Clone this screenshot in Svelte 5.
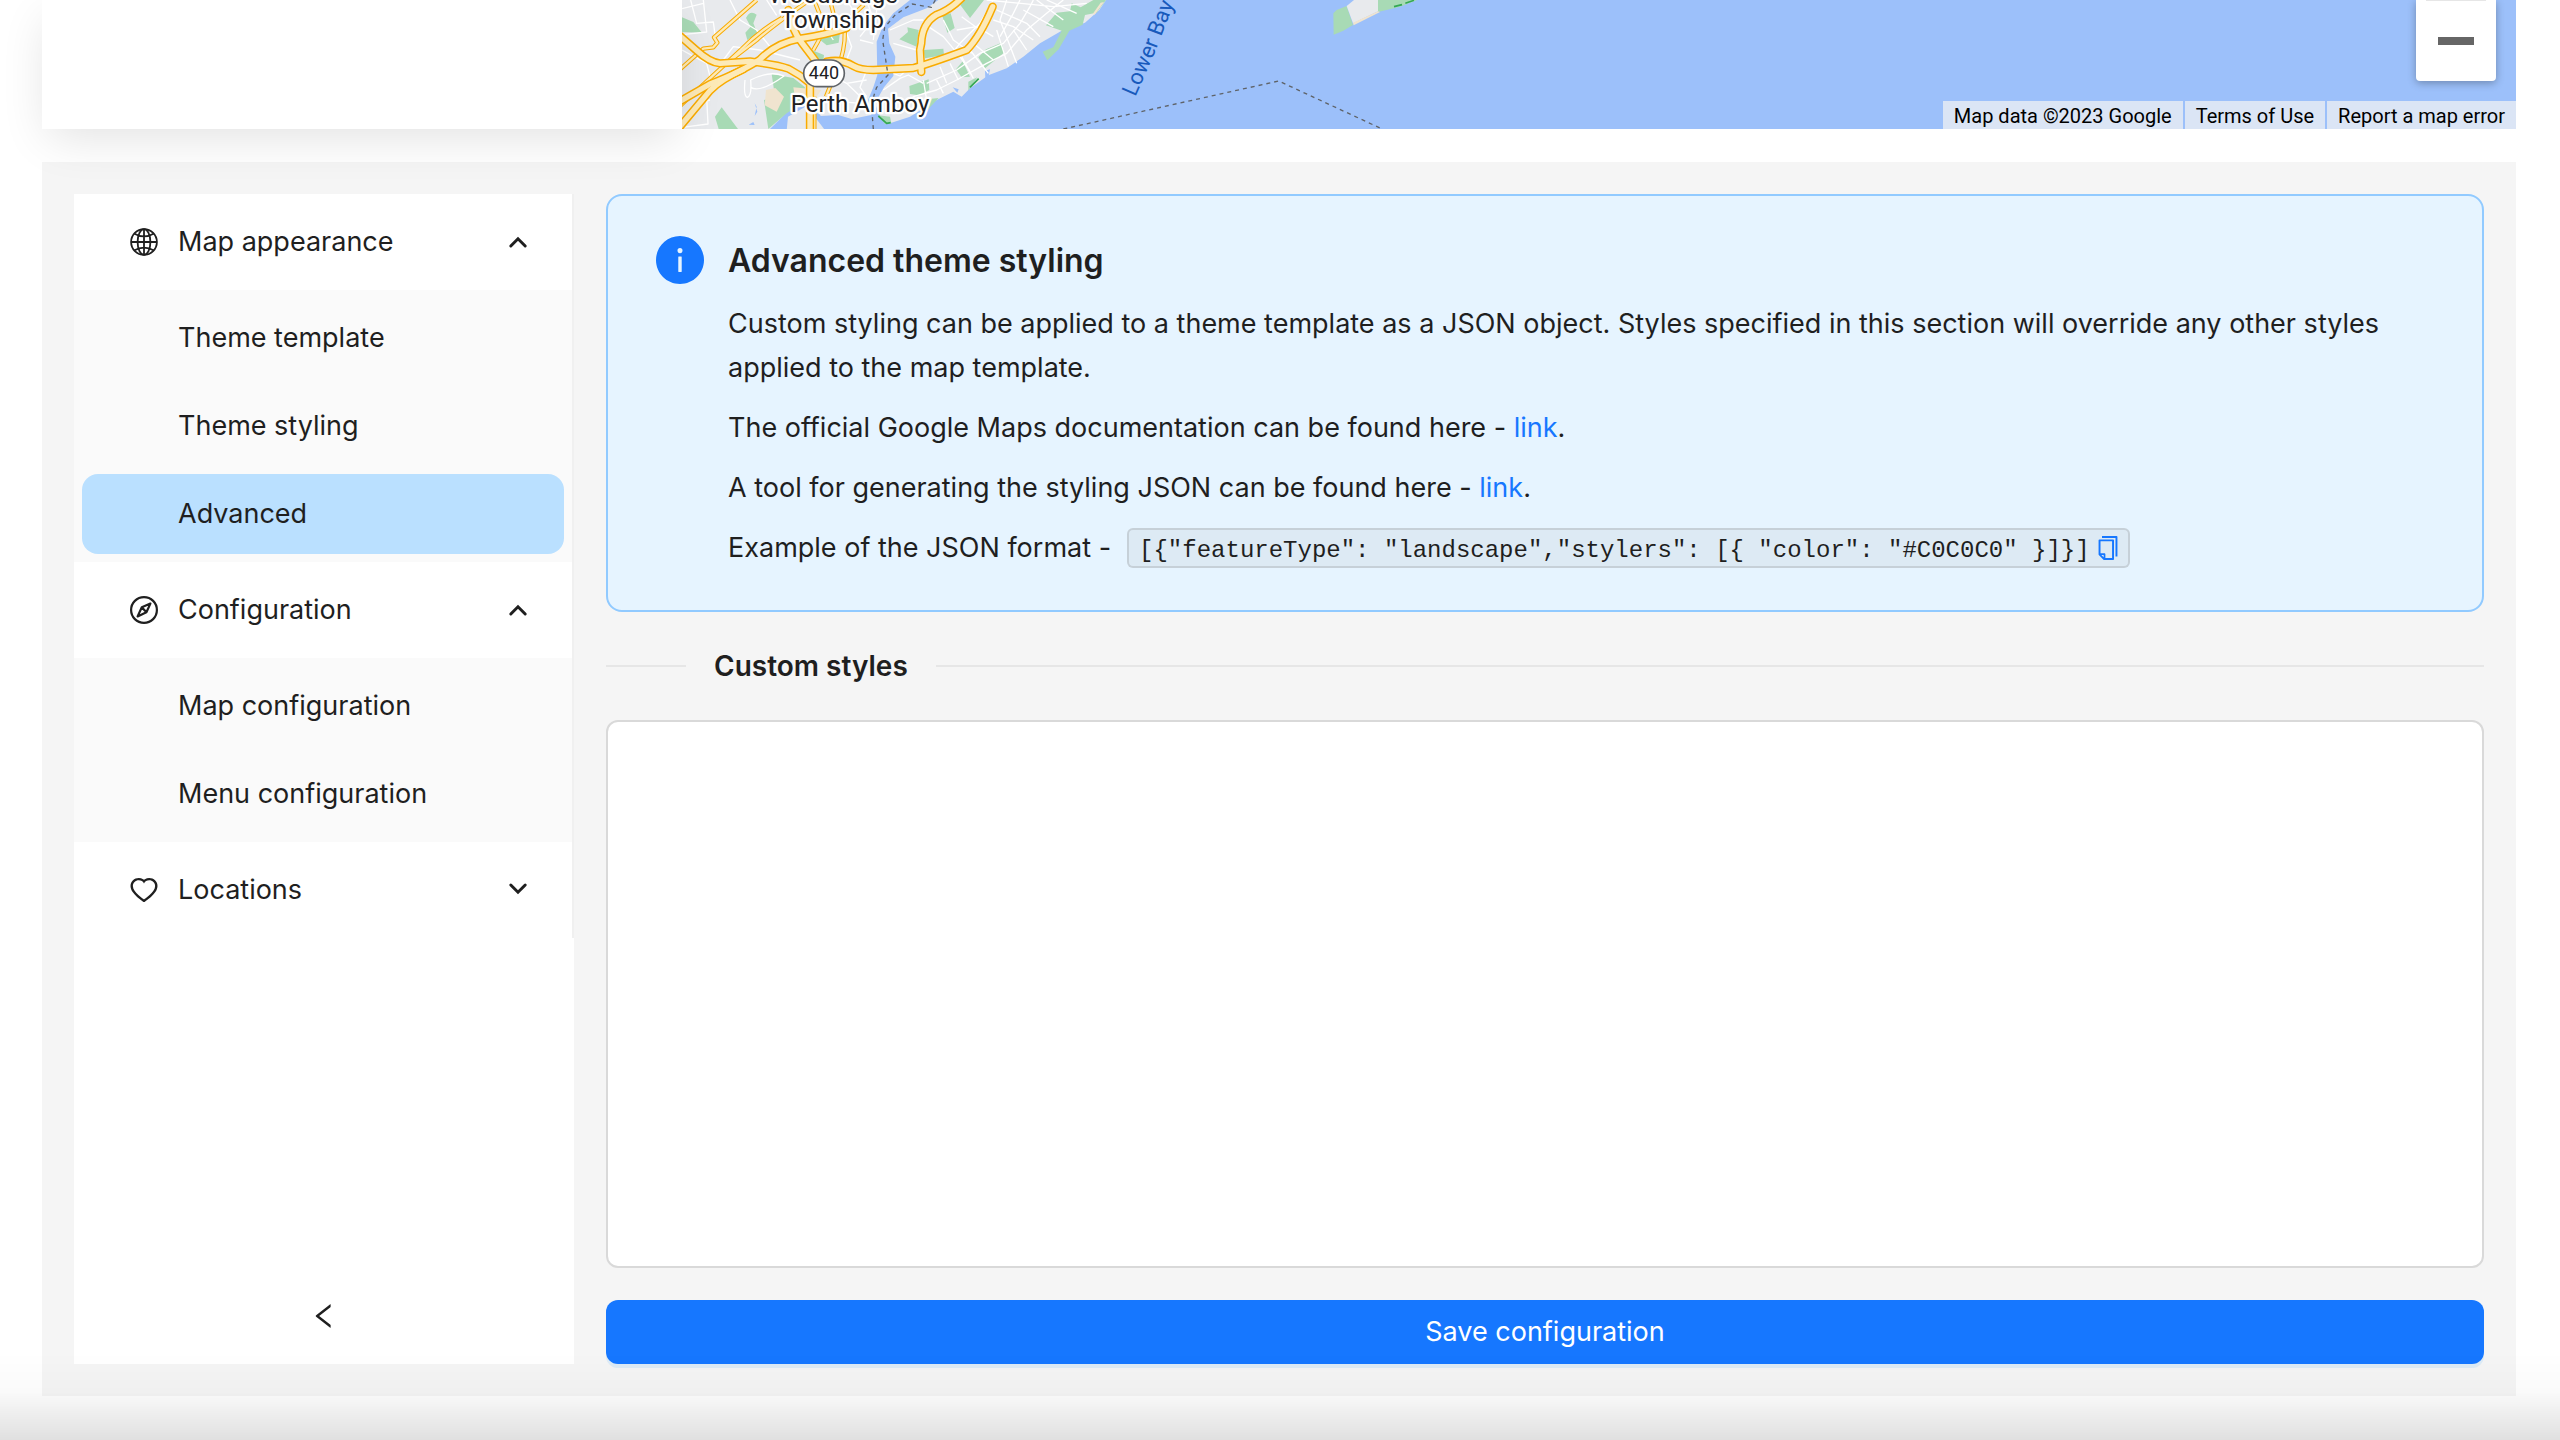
<script lang="ts">
  type Item = { id: string; label: string };
  type Group = { id: string; label: string; icon: string; items: Item[] };

  const groups: Group[] = [
    {
      id: "appearance",
      label: "Map appearance",
      icon: "globe",
      items: [
        { id: "template", label: "Theme template" },
        { id: "styling", label: "Theme styling" },
        { id: "advanced", label: "Advanced" },
      ],
    },
    {
      id: "configuration",
      label: "Configuration",
      icon: "compass",
      items: [
        { id: "map", label: "Map configuration" },
        { id: "menu", label: "Menu configuration" },
      ],
    },
    {
      id: "locations",
      label: "Locations",
      icon: "heart",
      items: [{ id: "list", label: "Location list" }],
    },
  ];

  const example = `[{"featureType": "landscape","stylers": [{ "color": "#C0C0C0" }]}]`;

  // highway centre lines, drawn twice: casing first, then fill
  const highways = [
    "M60 108 L108 150 Q150 188 180 190 L270 184 Q350 194 385 206 Q420 224 450 250 L450 392",
    "M60 304 L150 252 Q250 212 300 178 Q350 128 420 116 Q500 104 560 84",
    "M60 380 L150 272 Q180 240 250 208",
    "M385 30 Q395 90 425 128 L466 182",
    "M500 185 Q545 176 580 198 Q600 210 640 210 L760 204 Q800 194 920 150 Q960 110 998 20",
    "M905 -6 Q870 30 830 44 Q786 70 784 130 L780 150 L784 216",
  ];

  const mainRoads = [
    "M290 0 L162 112 L172 128 L160 142 L130 146 L60 208",
    "M366 54 Q300 90 240 152 L60 318",
    "M440 6 Q340 76 290 120 L215 178",
    "M462 0 L490 70 Q496 90 460 150",
    "M612 14 L552 70 Q560 120 542 180 L498 290",
    "M510 0 L520 40",
    "M463 290 L463 392",
  ];

  const streets = [
    "M66 26 L130 10 M130 0 L140 96 L66 104 M92 0 L110 70 L160 66 L166 112",
    "M66 150 L140 190 L150 230 M110 310 L150 300 M66 382 L144 372 L138 250",
    "M190 180 L220 140 L300 150 L420 180 M210 0 L240 60 L290 90 L330 140 L310 190",
    "M320 0 L350 46 M255 240 Q250 290 262 292 Q276 288 272 240 Q330 210 372 228 Q300 280 272 262",
    "M480 60 L520 120 M560 100 L575 140 L556 190 M600 120 L640 130 M560 250 L612 300 M520 230 L560 250 L620 240",
    "M620 210 L600 262 L620 290 M490 300 L600 310",
    "M690 90 L760 60 L790 60 M700 130 L770 150 M700 220 L720 228 L740 210 M670 270 L720 235 L745 225 L790 250",
    "M805 80 L850 110 L900 170 L930 215 M850 60 L880 120 L935 160 M905 50 L960 90 M890 90 L950 80 L1000 110",
    "M840 200 L860 250 M870 190 L895 240 M905 170 L940 235 M930 150 L985 220",
    "M720 330 L760 290 L830 270 L890 240 L980 190 L1040 160 L1100 90 L1160 40 L1210 0",
    "M800 250 L890 210 L960 160 L1030 130 L1080 70 L1110 20 L1120 0 M830 240 L850 280 M800 300 L790 240",
    "M1000 60 L1060 80 L1120 120 M1010 30 L1100 70 L1140 110 M1040 0 L1020 60 L1070 190",
    "M1010 90 L1045 200 M1090 30 L1180 80 M1130 0 L1210 60 M1160 0 L1250 40 M980 0 L1180 20 L1280 10",
    "M1000 0 L960 70 L900 130 L860 180 M1080 0 L1060 40 L1020 110 M940 130 L1000 180 M1060 90 L1100 150",
    "M620 0 L640 60 L600 110 M560 0 L610 80 M640 120 L650 30",
  ];

  let openGroups = $state(["appearance", "configuration"]);
  let selected = $state("advanced");
  let collapsed = $state(false);
  let customStyles = $state("");

  function toggle(id: string) {
    openGroups = openGroups.includes(id)
      ? openGroups.filter((g) => g !== id)
      : [...openGroups, id];
  }

  function copyExample() {
    navigator.clipboard?.writeText(example);
  }
</script>

<div class="page">
  <section class="preview">
    <div class="card"></div>
    <div class="map">
      <svg class="map-tiles" viewBox="66 0 2880 387" aria-hidden="true">
        <!-- west shore -->
        <path class="land" d="M60 0 H750 L700 40 L668 80 L650 125 L652 225 L640 262 L624 300 L634 345 L575 357 L535 345 L482 348 L470 320 L400 310 L372 345 L325 392 H60 Z" />
        <path class="land" d="M380 392 L384 350 L440 318 L496 392 Z" />
        <!-- island -->
        <path class="land" d="M1338 0 L1318 30 L1275 68 L1205 92 L1140 130 L1090 170 L1040 205 L985 226 L930 265 L905 290 L880 275 L830 300 L750 350 L690 370 L660 348 L645 310 L672 262 L700 228 L706 170 L688 130 L684 86 L730 52 L800 25 L835 0 Z" />
        <path class="park" d="M66 52 L100 66 L126 98 L66 96 Z M258 54 Q270 28 290 44 L280 70 L292 100 L262 120 L256 98 L272 80 Z M165 350 L185 322 L234 387 H176 Z M335 222 L400 234 L435 262 L430 308 L380 340 L325 387 L312 300 L345 290 Z M470 112 L540 98 L536 128 L500 136 Z M455 150 L492 165 L490 182 L450 180 Z" />
        <path class="park" d="M718 118 L744 96 L742 82 L776 90 L770 140 Z M790 150 L850 146 L852 165 L795 175 Z M846 44 L872 40 L884 84 L862 98 Z M890 0 H972 L930 54 Z M955 172 L978 148 L1025 128 L1032 158 L975 205 Z M888 208 L908 184 L930 230 L905 232 Z M748 258 L806 238 L808 270 L776 286 L750 282 Z M1158 76 L1190 38 L1230 34 L1235 10 L1262 22 L1300 0 H1338 L1310 38 L1275 45 L1268 74 L1228 92 L1196 148 L1162 181 L1148 155 L1180 142 L1205 92 Z M800 298 L836 294 L800 332 Z M925 245 L952 232 L925 272 Z M655 346 L690 350 L694 370 L675 372 Z" />
        <path class="sand" d="M318 270 L346 264 L372 290 L350 335 L314 316 Z M400 262 L484 270 L470 290 L404 286 Z M1322 8 L1332 6 L1304 44 L1298 42 Z" />
        <path class="water" d="M284 310 L292 335 L284 348 L290 320 Z M266 374 L280 366 L284 375 Z M878 262 L896 268 L892 278 Z M975 212 L990 208 L984 238 L976 236 Z" />
        <!-- spit in the bay -->
        <path class="park" d="M2020 40 L2030 30 L2060 18 L2079 75 L2050 92 L2021 104 Z M2154 0 H2272 L2220 20 L2154 36 Z" />
        <path class="land" d="M2060 18 L2082 0 H2154 V34 L2079 70 Z" />
        <path class="sand" d="M2079 68 L2154 34 L2160 36 L2081 76 Z" />
        <path class="reef" d="M2202 20 L2226 14 M2236 10 L2262 1 M930 262 L956 236 M655 348 L680 370 L692 368" />

        {#each streets as d}
          <path class="street" {d} />
        {/each}
        {#each mainRoads as d}
          <path class="main-casing" {d} />
        {/each}
        {#each mainRoads as d}
          <path class="main-fill" {d} />
        {/each}
        {#each highways as d}
          <path class="casing" {d} />
        {/each}
        {#each highways as d}
          <path class="fill" {d} />
        {/each}

        <path class="border-line" d="M826 0 L814 22 L756 12 L706 44 L674 82 L668 120 L684 225 L650 262 L634 310 L640 387" />
        <path class="border-line" d="M1210 387 L1856 243 L2160 384" />

        <rect class="shield" x="431" y="180" width="122" height="80" rx="40" />
        <text class="shield-text" x="492" y="238">440</text>
        <text class="place" x="520" y="10">Woodbridge</text>
        <text class="place" x="517" y="84">Township</text>
        <text class="place" x="600" y="337">Perth Amboy</text>
        <path id="bay-line" d="M1426 292 L1488 150 L1554 -20" fill="none" />
        <text class="bay"><textPath href="#bay-line">Lower Bay</textPath></text>
      </svg>

      <div class="zoom">
        <button type="button" class="zoom-btn" aria-label="Zoom out">
          <span class="minus"></span>
        </button>
      </div>
      <div class="credits">
        <span>Map data ©2023 Google</span>
        <a href="#terms">Terms of Use</a>
        <a href="#report">Report a map error</a>
      </div>
    </div>
  </section>

  <div class="workspace">
    <aside class="sidebar" class:collapsed>
      <nav class="menu">
        {#each groups as group (group.id)}
          {@const open = openGroups.includes(group.id)}
          <button type="button" class="group-title" aria-expanded={open} onclick={() => toggle(group.id)}>
            {#if group.icon === "globe"}
              <svg class="icon line globe" viewBox="0 0 28 28" aria-hidden="true">
                <circle cx="14" cy="14" r="12.9" />
                <ellipse cx="14" cy="14" rx="6.4" ry="12.9" />
                <path d="M14 1v26M1 14h26M4 5.4Q14 11.4 24 5.4M4 22.6Q14 16.6 24 22.6" />
              </svg>
            {:else if group.icon === "compass"}
              <svg class="icon line" viewBox="0 0 28 28" aria-hidden="true">
                <circle cx="14" cy="14" r="12.9" />
                <path d="M20.4 7.6L11.8 11.3L7.6 20.4L16.4 16.3ZM11.8 11.3L16.4 16.3" />
              </svg>
            {:else}
              <svg class="icon" viewBox="64 64 896 896" aria-hidden="true">
                <path d="M923 283.6a260.04 260.04 0 00-56.9-82.8 264.4 264.4 0 00-84-55.5A265.34 265.34 0 00679.7 125c-49.3 0-97.4 13.5-139.2 39-10 6.1-19.5 12.8-28.5 20.1-9-7.3-18.5-14-28.5-20.1-41.8-25.5-89.9-39-139.2-39-35.5 0-69.9 6.8-102.4 20.3-31.4 13-59.7 31.7-84 55.5a258.44 258.44 0 00-56.9 82.8c-13.9 32.3-21 66.6-21 101.9 0 33.3 6.8 68 20.3 103.3 11.3 29.5 27.5 60.1 48.2 91 32.8 48.9 77.9 99.9 133.9 151.6 92.8 85.7 184.7 144.9 188.6 147.3l23.7 15.2c10.5 6.7 24 6.7 34.5 0l23.7-15.2c3.9-2.5 95.7-61.6 188.6-147.3 56-51.7 101.1-102.7 133.9-151.6 20.7-30.9 37-61.5 48.2-91 13.5-35.3 20.3-70 20.3-103.3.1-35.3-7-69.6-20.9-101.9zM512 814.8S156 586.7 156 385.5C156 283.6 240.3 201 344.3 201c73.1 0 136.5 40.8 167.7 100.4C543.2 241.8 606.6 201 679.7 201c104 0 188.3 82.6 188.3 184.5 0 201.2-356 429.3-356 429.3z" />
              </svg>
            {/if}
            <span class="group-label">{group.label}</span>
            <svg class="chevron" viewBox="0 0 20 20" aria-hidden="true">
              <path d={open ? "M2.8 14L10 6.8L17.2 14" : "M2.8 5L10 12.2L17.2 5"} />
            </svg>
          </button>
          {#if open}
            <div class="submenu">
              {#each group.items as item (item.id)}
                <a
                  href="#{item.id}"
                  class="item"
                  class:selected={selected === item.id}
                  onclick={() => (selected = item.id)}
                >
                  {item.label}
                </a>
              {/each}
            </div>
          {/if}
        {/each}
      </nav>
      <button type="button" class="collapse" aria-label="Collapse menu" onclick={() => (collapsed = !collapsed)}>
        <svg class="icon" viewBox="64 64 896 896" aria-hidden="true">
          <path d="M724 218.3V141c0-6.7-7.7-10.4-12.9-6.3L260.3 486.8a31.86 31.86 0 000 50.3l450.8 352.1c5.3 4.1 12.9.4 12.9-6.3v-77.3c0-4.9-2.3-9.6-6.1-12.6l-360-281 360-281.1c3.8-3 6.1-7.7 6.1-12.6z" />
        </svg>
      </button>
    </aside>

    <main class="content">
      <div class="alert">
        <svg class="info" viewBox="64 64 896 896" aria-hidden="true">
          <path d="M512 64C264.6 64 64 264.6 64 512s200.6 448 448 448 448-200.6 448-448S759.4 64 512 64zm32 664c0 4.4-3.6 8-8 8h-48c-4.4 0-8-3.6-8-8V456c0-4.4 3.6-8 8-8h48c4.4 0 8 3.6 8 8v272zm-32-344a48.01 48.01 0 010-96 48.01 48.01 0 010 96z" />
        </svg>
        <div class="alert-body">
          <h2>Advanced theme styling</h2>
          <p>
            Custom styling can be applied to a theme template as a JSON object. Styles specified in this section
            will override any other styles applied to the map template.
          </p>
          <p>The official Google Maps documentation can be found here - <a href="#docs">link</a>.</p>
          <p>A tool for generating the styling JSON can be found here - <a href="#tool">link</a>.</p>
          <p class="example">
            <span>Example of the JSON format -</span>
            <code>
              <span class="snippet">{example}</span>
              <button type="button" class="copy" aria-label="Copy" onclick={copyExample}>
                <svg viewBox="64 64 896 896" aria-hidden="true">
                  <path d="M832 64H296c-4.4 0-8 3.6-8 8v56c0 4.4 3.6 8 8 8h496v688c0 4.4 3.6 8 8 8h56c4.4 0 8-3.6 8-8V96c0-17.7-14.3-32-32-32zM704 192H192c-17.7 0-32 14.3-32 32v530.7c0 8.5 3.4 16.6 9.4 22.6l173.3 173.3c2.2 2.2 4.7 4 7.4 5.5v1.9h4.2c3.5 1.3 7.2 2 11 2H704c17.7 0 32-14.3 32-32V224c0-17.7-14.3-32-32-32zM350 856.2L263.9 770H350v86.2zM664 888H414V746c0-22.1-17.9-40-40-40H232V264h432v624z" />
                </svg>
              </button>
            </code>
          </p>
        </div>
      </div>

      <label class="divider" for="custom-styles">Custom styles</label>
      <textarea id="custom-styles" rows="12" bind:value={customStyles}></textarea>
      <button type="button" class="save">Save configuration</button>
    </main>
  </div>
</div>

<div class="bottom-shade"></div>

<style>
  :global(body) {
    margin: 0;
    background: #fff;
  }

  .page {
    padding: 0 44px 44px 42px;
    color: #1f1f1f;
    font-family: Inter, "Open Sans", sans-serif;
    font-size: 27px;
    line-height: 44px;
  }

  button {
    padding: 0;
    border: none;
    background: none;
    color: inherit;
    font: inherit;
    cursor: pointer;
  }

  a {
    color: #1677ff;
    text-decoration: none;
  }

  .preview {
    display: flex;
    height: 129px;
  }

  .card {
    position: relative;
    z-index: 1;
    flex: none;
    width: 640px;
    background: #fff;
    box-shadow: 0 14px 48px -6px rgba(0, 0, 0, 0.12);
  }

  .map {
    position: relative;
    flex: 1;
    overflow: hidden;
    background: #9cc0fa;
  }

  .map-tiles {
    display: block;
    width: 960px;
    height: 129px;
  }

  .land {
    fill: #e8eaed;
  }

  .park {
    fill: #a8dab5;
  }

  .sand {
    fill: #f0e4cf;
  }

  .water {
    fill: #9cc0fa;
  }

  .reef,
  .street,
  .main-casing,
  .main-fill,
  .casing,
  .fill,
  .border-line {
    fill: none;
    stroke-linejoin: round;
  }

  .reef {
    stroke: #34a853;
    stroke-width: 5;
  }

  .street {
    stroke: #fff;
    stroke-width: 4;
  }

  .main-casing {
    stroke: #f9ab00;
    stroke-width: 13;
  }

  .main-fill {
    stroke: #fdeab8;
    stroke-width: 7;
  }

  .casing {
    stroke: #f9ab00;
    stroke-width: 25;
    stroke-linecap: round;
  }

  .fill {
    stroke: #fdeab8;
    stroke-width: 16;
    stroke-linecap: round;
  }

  .border-line {
    stroke: #5f6368;
    stroke-width: 4;
    stroke-dasharray: 12 12;
  }

  .shield {
    fill: #fff;
    stroke: #5f6368;
    stroke-width: 5;
  }

  .shield-text,
  .place,
  .bay {
    font-family: Roboto, sans-serif;
    fill: #202124;
  }

  .shield-text {
    font-size: 54px;
    text-anchor: middle;
  }

  .place {
    font-size: 72px;
    text-anchor: middle;
    paint-order: stroke;
    stroke: #fff;
    stroke-width: 14;
    stroke-linejoin: round;
  }

  .bay {
    font-size: 66px;
    fill: #185abc;
  }

  .zoom {
    position: absolute;
    top: 0;
    right: 20px;
    width: 80px;
    background: #fff;
    border-radius: 0 0 4px 4px;
    box-shadow: 0 2px 8px rgba(0, 0, 0, 0.3);
  }

  .zoom-btn {
    display: flex;
    align-items: center;
    justify-content: center;
    width: 60px;
    height: 81px;
    margin: 0 auto;
    border-top: 1px solid #e6e6e6;
  }

  .minus {
    width: 36px;
    height: 8px;
    background: #666;
  }

  .credits {
    position: absolute;
    right: 0;
    bottom: 0;
    display: flex;
    gap: 2px;
    font-family: Roboto, sans-serif;
    font-size: 20px;
    line-height: 26px;
  }

  .credits span,
  .credits a {
    padding: 2px 11px 0;
    background: #dbe5f5;
    color: #000;
  }

  .workspace {
    display: flex;
    gap: 32px;
    margin-top: 33px;
    padding: 32px;
    background: #f5f5f5;
  }

  .sidebar {
    position: relative;
    z-index: 2;
    display: flex;
    flex: none;
    flex-direction: column;
    justify-content: space-between;
    width: 500px;
    background: #fff;
  }

  .sidebar.collapsed {
    width: 160px;
    overflow: hidden;
  }

  .menu {
    border-right: 2px solid #f0f0f0;
  }

  .group-title {
    display: flex;
    align-items: center;
    gap: 20px;
    box-sizing: border-box;
    width: 100%;
    height: 96px;
    padding: 0 44px 0 56px;
    text-align: left;
  }

  .group-label {
    flex: 1;
  }

  .icon {
    flex: none;
    width: 28px;
    height: 28px;
    fill: currentColor;
  }

  .icon.line {
    fill: none;
    stroke: currentColor;
    stroke-width: 2.2;
    stroke-linejoin: round;
  }

  .icon.globe {
    stroke-width: 1.8;
  }

  .chevron {
    flex: none;
    width: 20px;
    height: 20px;
    fill: none;
    stroke: currentColor;
    stroke-width: 3;
    stroke-linecap: round;
  }

  .submenu {
    display: flex;
    flex-direction: column;
    gap: 8px;
    padding: 8px;
    background: #fafafa;
  }

  .item {
    display: flex;
    align-items: center;
    height: 80px;
    padding-left: 96px;
    border-radius: 16px;
    color: inherit;
  }

  .item.selected {
    background: #bae0ff;
  }

  .collapse {
    display: flex;
    align-items: center;
    justify-content: center;
    height: 96px;
  }

  .content {
    display: flex;
    flex: 1;
    flex-direction: column;
    min-width: 0;
  }

  .alert {
    display: flex;
    gap: 24px;
    padding: 40px 48px;
    border: 2px solid #91caff;
    border-radius: 16px;
    background: #e6f4ff;
  }

  .info {
    flex: none;
    width: 48px;
    height: 48px;
    fill: #1677ff;
  }

  .alert-body {
    display: flex;
    flex: 1;
    flex-direction: column;
    gap: 16px;
  }

  h2 {
    margin: 0;
    font-size: 32px;
    font-weight: 600;
    line-height: 50px;
  }

  p {
    margin: 0;
  }

  .example {
    display: flex;
    align-items: center;
    gap: 16px;
  }

  code {
    display: flex;
    align-items: center;
    gap: 6px;
    padding: 0 8px 0 10px;
    border: 2px solid rgba(100, 100, 100, 0.2);
    border-radius: 6px;
    background: rgba(150, 150, 150, 0.1);
    font-family: "Liberation Mono", "Courier New", monospace;
    font-size: 24px;
  }

  .snippet {
    padding-top: 6px;
    line-height: 30px;
  }

  .copy {
    display: flex;
    color: #1677ff;
  }

  .copy svg {
    width: 24px;
    height: 24px;
    fill: currentColor;
  }

  .divider {
    display: flex;
    align-items: center;
    gap: 28px;
    margin: 32px 0;
    font-size: 28px;
    font-weight: 600;
  }

  .divider::before,
  .divider::after {
    content: "";
    height: 2px;
    background: #e6e6e6;
  }

  .divider::before {
    width: 80px;
  }

  .divider::after {
    flex: 1;
  }

  textarea {
    display: block;
    box-sizing: border-box;
    width: 100%;
    padding: 8px 22px;
    border: 2px solid #d9d9d9;
    border-radius: 12px;
    background: #fff;
    color: inherit;
    font: inherit;
    resize: none;
  }

  .save {
    height: 64px;
    margin-top: 32px;
    border-radius: 12px;
    background: #1677ff;
    box-shadow: 0 4px 0 rgba(5, 145, 255, 0.1);
    color: #fff;
  }

  .bottom-shade {
    position: fixed;
    right: 0;
    bottom: 0;
    left: 0;
    z-index: 3;
    height: 88px;
    background: linear-gradient(rgba(0, 0, 0, 0), rgba(0, 0, 0, 0.02) 45%, rgba(0, 0, 0, 0.12));
    pointer-events: none;
  }
</style>
